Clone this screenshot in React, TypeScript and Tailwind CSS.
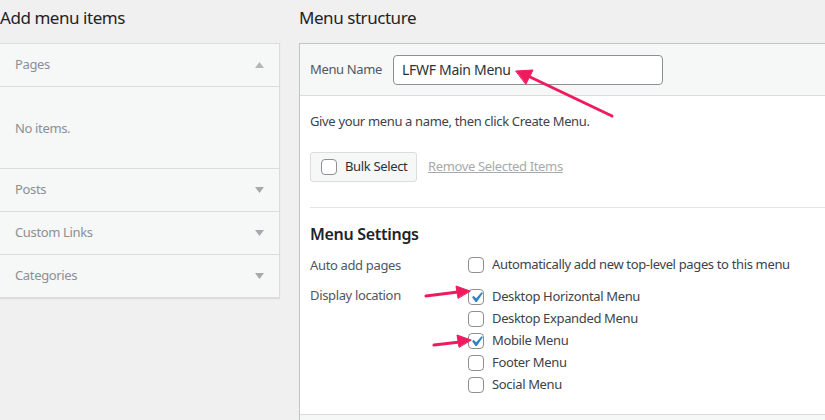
import React from "react";

const Box = ({ checked = false }: { checked?: boolean }) => (
  <span className="relative inline-block w-4 h-4 shrink-0 rounded-[4px] border border-[#8c8f94] bg-white">
    {checked && (
      <svg className="absolute -left-[3px] -top-[3px]" width="21" height="21" viewBox="0 0 20 20">
        <path d="M14.83 4.89l1.34.94-5.81 8.38H9.02L5.78 9.67l1.34-1.25 2.57 2.4z" fill="#3582c4" />
      </svg>
    )}
  </span>
);

const Tri = ({ up = false }: { up?: boolean }) => (
  <svg width="9" height="6" viewBox="0 0 9 6">
    {up ? <path d="M0 6 L4.5 0 L9 6 Z" fill="#b4b6b9" /> : <path d="M0 0 L9 0 L4.5 6 Z" fill="#a7aaad" />}
  </svg>
);

const Row = ({ label, up = false }: { label: string; up?: boolean }) => (
  <div className="h-[43px] flex items-center justify-between pl-[15px] pr-[15px] border-b border-[#dcdcde] text-[#8c8f94]">
    <span>{label}</span>
    <Tri up={up} />
  </div>
);

export default function App() {
  const font = { fontFamily: '"Noto Sans", "Open Sans", sans-serif' };
  return (
    <div
      className="relative w-[825px] h-[420px] overflow-hidden bg-[#f0f0f1] text-[13px] tracking-[-0.35px] text-[#3c434a]"
      style={font}
    >
      <div className="flex gap-[19px] -ml-px">
        {/* Left column */}
        <div className="w-[281px] shrink-0">
          <h2 className="h-[43px] pt-[6px] pl-px text-[17px] leading-[24px] tracking-[-0.45px] text-[#1d2327]">Add menu items</h2>
          <div className="border border-[#dcdcde] bg-[#f6f7f7] shadow-[0_1px_1px_rgba(0,0,0,0.08)]">
            <Row label="Pages" up />
            <div className="h-[82px] flex items-center pl-[15px] pt-[2px] border-b border-[#dcdcde] text-[#8c8f94]">
              No items.
            </div>
            <Row label="Posts" />
            <Row label="Custom Links" />
            <div className="h-[42px] flex items-center justify-between pl-[15px] pr-[15px] text-[#8c8f94]">
              <span>Categories</span>
              <Tri />
            </div>
          </div>
        </div>

        {/* Right column */}
        <div className="w-[540px] shrink-0">
          <h2 className="h-[43px] pt-[6px] text-[17px] leading-[24px] tracking-[-0.45px] text-[#1d2327]">Menu structure</h2>
          <div className="border border-[#c3c4c7] bg-white">
            <div className="h-[52px] flex items-center bg-[#f6f7f7] border-b border-[#dcdcde] pl-[10px]">
              <span className="w-[83px] text-[#50575e]">Menu Name</span>
              <div className="w-[270px] h-[30px] rounded-[4px] border border-[#8c8f94] bg-white flex items-center pl-[8px] text-[14px] tracking-[-0.3px] text-[#2c3338]">
                LFWF Main Menu
              </div>
            </div>
            <div className="px-[10px]">
              <p className="pt-[15px] leading-[20px]">Give your menu a name, then click Create Menu.</p>
              <div className="flex items-center mt-[21px] gap-[11px]">
                <div className="h-[30px] w-[107px] flex items-center gap-[8px] pl-[10px] rounded-[3px] border border-[#dcdcde] bg-[#f6f7f7]">
                  <span className="inline-block w-4 h-4 rounded-[4px] border border-[#8c8f94] bg-white" />
                  <span className="text-[#2c3338]">Bulk Select</span>
                </div>
                <span className="text-[#a7aaad] underline">Remove Selected Items</span>
              </div>
              <div className="mt-[25px] border-t border-[#e4e4e6]" />
              <h3 className="mt-[14px] text-[16px] leading-[24px] tracking-[-0.3px] font-semibold text-[#1d2327]">Menu Settings</h3>
              <div className="flex mt-[8px]">
                <div className="w-[158px] text-[#50575e] leading-[22px]">Auto add pages</div>
                <div className="flex items-center gap-[8px] h-[22px]">
                  <Box />
                  <span>Automatically add new top-level pages to this menu</span>
                </div>
              </div>
              <div className="flex mt-[10px]">
                <div className="w-[158px] text-[#50575e] leading-[22px] -mt-[2px]">Display location</div>
                <div className="flex flex-col">
                  {[
                    ["Desktop Horizontal Menu", true],
                    ["Desktop Expanded Menu", false],
                    ["Mobile Menu", true],
                    ["Footer Menu", false],
                    ["Social Menu", false],
                  ].map(([t, c]) => (
                    <div key={t as string} className="flex items-center gap-[8px] h-[22px]">
                      <Box checked={c as boolean} />
                      <span>{t as string}</span>
                    </div>
                  ))}
                </div>
              </div>
              <div className="h-[18px]" />
            </div>
            <div className="border-t border-[#dcdcde] bg-[#f6f7f7] h-[20px]" />
          </div>
        </div>
      </div>

      {/* annotation arrows */}
      <svg className="absolute left-0 top-0 pointer-events-none" width="825" height="420" viewBox="0 0 825 420">
        <g stroke="#ee1c5f" strokeWidth="3" strokeLinecap="round" fill="#ee1c5f">
          <line x1="612" y1="116" x2="528" y2="76" />
          <path d="M516 71 L533 70 L526 84 Z" strokeWidth="1" strokeLinejoin="round" />
          <line x1="426" y1="296" x2="458" y2="292" />
          <path d="M470 291 L456 286 L458 298 Z" strokeWidth="1" strokeLinejoin="round" />
          <line x1="434" y1="345" x2="460" y2="342" />
          <path d="M471 340 L457 335 L459 347 Z" strokeWidth="1" strokeLinejoin="round" />
        </g>
      </svg>
    </div>
  );
}
